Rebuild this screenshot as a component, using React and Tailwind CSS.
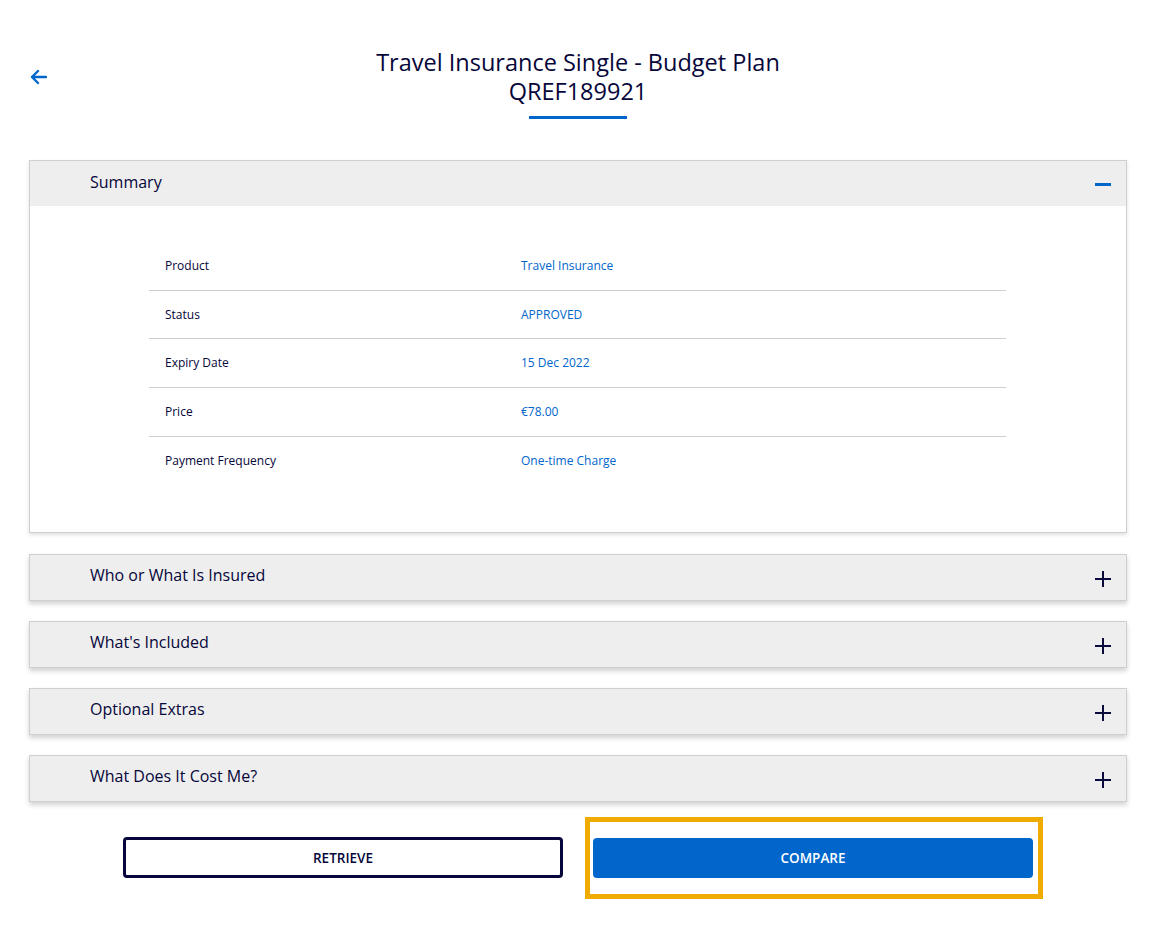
import React from "react";

const rows = [
  ["Product", "Travel Insurance"],
  ["Status", "APPROVED"],
  ["Expiry Date", "15 Dec 2022"],
  ["Price", "€78.00"],
  ["Payment Frequency", "One-time Charge"],
];

function Plus() {
  return (
    <svg width="16" height="16" viewBox="0 0 16 16" className="block">
      <path d="M8 0v16M0 8h16" stroke="#0a0a3c" strokeWidth="2" fill="none" />
    </svg>
  );
}

function Collapsed({ title }) {
  return (
    <div className="h-[47px] border border-[#cfcfcf] bg-[#eeeeee] shadow-[0_3px_5px_rgba(0,0,0,0.18)] flex items-center justify-between pl-[60px] pr-[15px]">
      <span className="text-[16px] font-medium text-[#06063a] -mt-[5px]">{title}</span>
      <span className="mt-[2px]"><Plus /></span>
    </div>
  );
}

export default function App() {
  return (
    <div className="min-h-[926px] bg-white text-[#06063a]" style={{ fontFamily: '"Open Sans", "Noto Sans", sans-serif' }}>
      <div className="pl-[29px] pr-[31px] pt-[48px]">
        <div className="relative flex flex-col items-center">
          <button className="absolute left-0 top-[21px] text-[#0066cc]">
            <svg width="18" height="16" viewBox="0 0 18 16">
              <path d="M17 8H3M9 2L3 8l6 6" stroke="#0066cc" strokeWidth="2.4" fill="none" strokeLinecap="round" strokeLinejoin="round" />
            </svg>
          </button>
          <h1 className="text-[23.5px] leading-[29px] font-medium text-center">Travel Insurance Single - Budget Plan</h1>
          <div className="text-[23.5px] leading-[29px] font-medium text-center">QREF189921</div>
          <div className="mt-[10px] w-[98px] h-[3px] bg-[#0066cc]" />
        </div>

        <div className="mt-[41px] border border-[#cfcfcf] shadow-[0_2px_4px_rgba(0,0,0,0.12)]">
          <div className="h-[45px] bg-[#eeeeee] flex items-center justify-between pl-[60px] pr-[15px]">
            <span className="text-[16px] font-medium -mt-[4px]">Summary</span>
            <span className="w-[16px] h-[3px] bg-[#0066cc] mt-[2px]" />
          </div>
          <div className="bg-white pt-[36px] pb-[47px] px-[119px]">
            <div className="w-[857px]">
              {rows.map(([k, v], i) => (
                <div
                  key={k}
                  className={`h-[48.7px] flex items-center text-[12px] ${i < rows.length - 1 ? "border-b border-[#cfcfcf]" : ""}`}
                >
                  <span className="w-[372px] pl-[16px] text-[#06063a]">{k}</span>
                  <span className="text-[#0066cc]">{v}</span>
                </div>
              ))}
            </div>
          </div>
        </div>

        <div className="mt-[21px] flex flex-col gap-[20px]">
          <Collapsed title="Who or What Is Insured" />
          <Collapsed title="What's Included" />
          <Collapsed title="Optional Extras" />
          <Collapsed title="What Does It Cost Me?" />
        </div>

        <div className="mt-[35px] flex justify-center items-center gap-[30px]">
          <button className="w-[440px] h-[41px] rounded-[4px] border-[3px] border-[#06063a] bg-white text-[13.5px] font-semibold text-[#06063a]">
            RETRIEVE
          </button>
          <div className="relative">
            <button className="w-[440px] h-[40px] rounded-[4px] bg-[#0066cc] text-[13.5px] font-semibold text-white block">
              COMPARE
            </button>
            <div className="absolute -left-[8px] -right-[10px] -top-[21px] -bottom-[21px] border-[5px] border-[#f0ab00] pointer-events-none" />
          </div>
        </div>
      </div>
    </div>
  );
}
